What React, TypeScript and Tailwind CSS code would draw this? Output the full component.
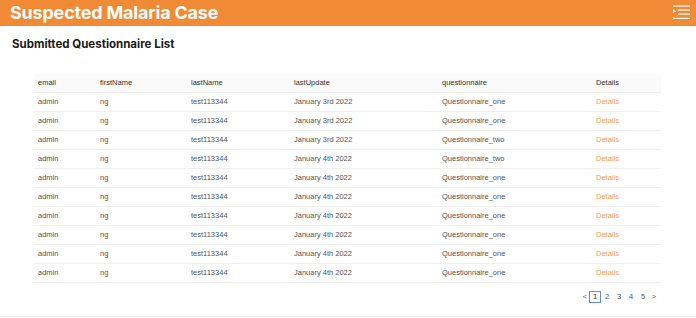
import React from "react";

const rows = [
  ["admin", "ng", "test113344", "January 3rd 2022", "Questionnaire_one"],
  ["admin", "ng", "test113344", "January 3rd 2022", "Questionnaire_one"],
  ["admin", "ng", "test113344", "January 3rd 2022", "Questionnaire_two"],
  ["admin", "ng", "test113344", "January 4th 2022", "Questionnaire_two"],
  ["admin", "ng", "test113344", "January 4th 2022", "Questionnaire_one"],
  ["admin", "ng", "test113344", "January 4th 2022", "Questionnaire_one"],
  ["admin", "ng", "test113344", "January 4th 2022", "Questionnaire_one"],
  ["admin", "ng", "test113344", "January 4th 2022", "Questionnaire_one"],
  ["admin", "ng", "test113344", "January 4th 2022", "Questionnaire_one"],
  ["admin", "ng", "test113344", "January 4th 2022", "Questionnaire_one"],
];

const cols = ["w-[62px]", "w-[91px]", "w-[103px]", "w-[148px]", "w-[154px]", "flex-1"];
const heads = ["email", "firstName", "lastName", "lastUpdate", "questionnaire", "Details"];

export default function App() {
  return (
    <div className="w-[696px] h-[318px] bg-white relative overflow-hidden" style={{ fontFamily: "Inter, 'Liberation Sans', sans-serif" }}>
      <div className="h-[26px] bg-[#f08a35] flex items-center justify-between pl-[10px] pr-[6px]">
        <div className="text-white font-bold text-[18px] leading-none tracking-[-0.2px]">Suspected Malaria Case</div>
        <svg width="17" height="15" viewBox="0 0 17 15" className="mt-[-1px]">
          <rect x="0" y="0.5" width="17" height="1.2" fill="#fff" />
          <rect x="5" y="4.5" width="12" height="1.2" fill="#fff" />
          <rect x="5" y="8.5" width="12" height="1.2" fill="#fff" />
          <rect x="0" y="12.8" width="17" height="1.2" fill="#fff" />
          <path d="M0 4.2 L3 6.2 L0 8.2 Z" fill="#fff" />
        </svg>
      </div>
      <div className="pl-[12px] pt-[10px] text-[11.5px] font-bold text-[#1a1a1a] leading-[16px]">Submitted Questionnaire List</div>
      <div className="ml-[34px] w-[627px] mt-[22px]" style={{ fontFamily: "'Liberation Sans', Arial, sans-serif" }}>
        <div className="flex h-[19px] items-center bg-[#fafafa] border-b border-[#f0f0f0] text-[7.5px] text-[#333]">
          {heads.map((h, i) => (
            <div key={i} className={`${cols[i]} pl-[4px]`}>{h}</div>
          ))}
        </div>
        {rows.map((r, ri) => (
          <div key={ri} className="flex h-[19px] items-center border-b border-[#f0f0f0] text-[7.5px] text-[#555]">
            {r.map((c, i) => (
              <div key={i} className={`${cols[i]} pl-[4px]`}>{c}</div>
            ))}
            <div className={`${cols[5]} pl-[4px] text-[#f0a050]`}>Details</div>
          </div>
        ))}
        <div className="flex justify-end items-center mt-[8px] pr-[2px] text-[7.5px] text-[#555]">
          <span className="w-[8px] text-center">&lt;</span>
          <span className="w-[12px] h-[12px] border border-[#5b8fd6] flex items-center justify-center text-[#333]">1</span>
          <span className="w-[12px] text-center">2</span>
          <span className="w-[12px] text-center">3</span>
          <span className="w-[12px] text-center">4</span>
          <span className="w-[12px] text-center">5</span>
          <span className="w-[10px] text-center">&gt;</span>
        </div>
      </div>
      <div className="absolute left-0 right-0 bottom-[1px] h-px bg-[#eeeeee]" />
    </div>
  );
}
